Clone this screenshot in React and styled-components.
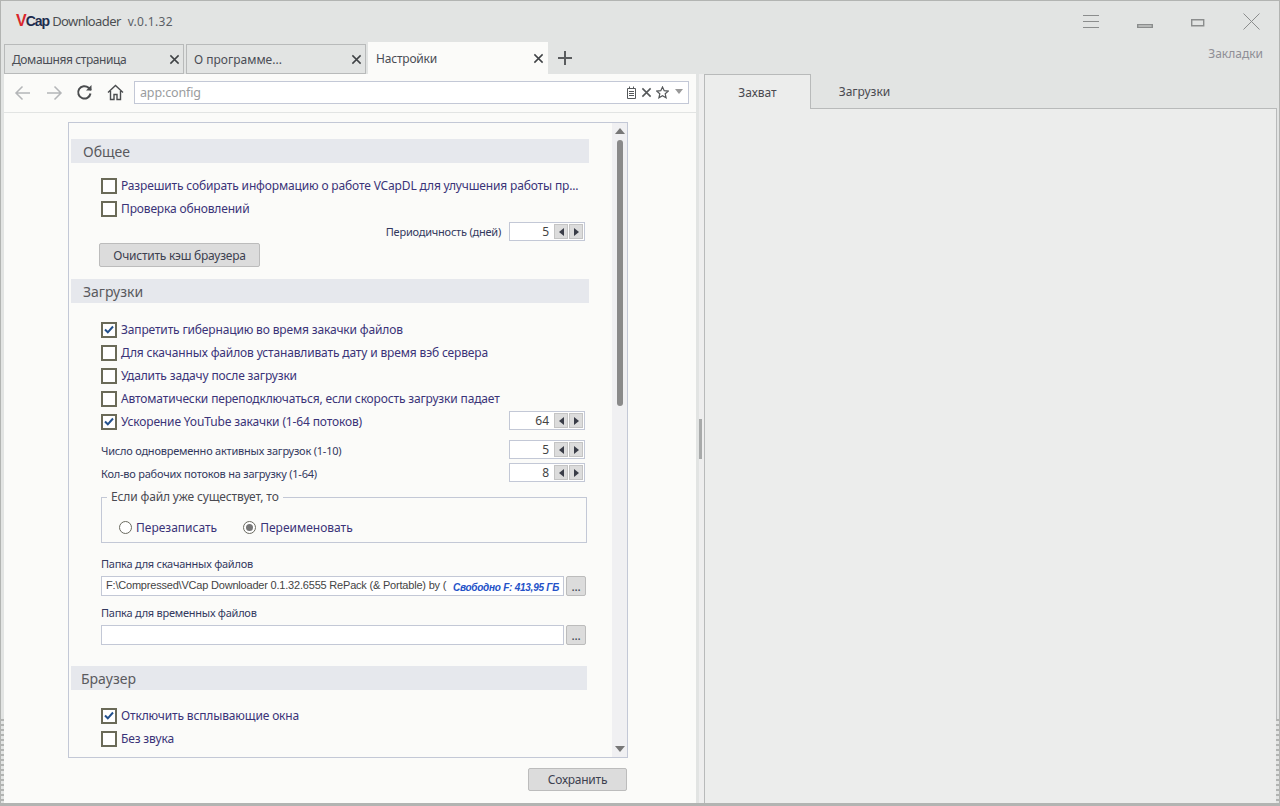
import styled, { createGlobalStyle } from 'styled-components';

const GlobalStyle = createGlobalStyle`
  html, body {
    margin: 0;
    padding: 0;
    background: #e2e4e3;
    overflow: hidden;
  }
  * {
    box-sizing: border-box;
  }
  body {
    font-family: "Noto Sans", "Liberation Sans", sans-serif;
    font-size: 12px;
    letter-spacing: -0.15px;
  }
`;

const Window = styled.div`
  position: relative;
  display: flex;
  flex-direction: column;
  width: 1280px;
  height: 806px;
  background: #e2e4e3;
  border-top: 1px solid #b2b4b2;
  border-bottom: 3px solid #b2b4b2;
  border-left: 1px solid #b2b4b2;
  border-right: 1px solid #b2b4b2;
  overflow: hidden;
`;

// resize grip dashes on the window edges
const EdgeGrip = styled.span`
  position: absolute;
  top: 718px;
  ${(p) => (p.$right ? 'right: -1px;' : 'left: -1px;')}
  width: 4px;
  height: 84px;
  background: repeating-linear-gradient(to bottom, #b2b4b2 0 2px, #e2e4e3 2px 5px);
`;

const TitleBar = styled.div`
  display: flex;
  align-items: center;
  justify-content: space-between;
  height: 41px;
  padding: 0 15px;
`;

const Brand = styled.div`
  display: flex;
  align-items: baseline;
  margin-top: -1px;
`;

const LogoMark = styled.span`
  font-family: "Liberation Sans", sans-serif;
  font-size: 14px;
  font-weight: 700;
  letter-spacing: -1px;
  color: #1d2c4e;
  em {
    font-style: normal;
    font-size: 16px;
    color: #d9262c;
  }
`;

const LogoWord = styled.span`
  font-size: 13px;
  letter-spacing: -0.6px;
  color: #4c4f52;
  margin-left: 3px;
`;

const Version = styled.span`
  font-size: 12px;
  letter-spacing: 0.3px;
  color: #5b6066;
  margin-left: 7px;
`;

const WindowButtons = styled.div`
  display: flex;
  align-items: center;
  gap: 38px;
  margin-right: 4px;
  color: #8b8d8d;
  svg {
    display: block;
  }
`;

const TabRow = styled.div`
  display: flex;
  align-items: flex-end;
  height: 32px;
  padding-left: 3px;
`;

const Tab = styled.div`
  display: flex;
  align-items: center;
  justify-content: space-between;
  width: 180px;
  height: ${(p) => (p.$active ? '32px' : '30px')};
  margin-right: 2px;
  padding: 0 3px 0 7px;
  background: ${(p) => (p.$active ? '#fbfbf9' : '#e2e4e3')};
  border: 1px solid ${(p) => (p.$active ? '#fbfbf9' : '#b8baba')};
  color: #4a4d55;
  letter-spacing: ${(p) => p.$spacing || 0}px;
  svg {
    display: block;
    color: #3f4245;
  }
`;

const AddTab = styled.div`
  display: flex;
  align-items: center;
  height: 32px;
  margin-left: 8px;
  color: #5a5c5e;
  svg {
    display: block;
  }
`;

const Bookmarks = styled.div`
  margin-left: auto;
  align-self: flex-start;
  padding: 3px 16px 0 0;
  letter-spacing: 0;
  color: #8f8f96;
`;

const Main = styled.div`
  display: flex;
  flex: 1;
  min-height: 0;
  padding-left: 3px;
`;

const LeftPanel = styled.div`
  display: flex;
  flex-direction: column;
  width: 692px;
  background: #fbfbf9;
`;

const Toolbar = styled.div`
  display: flex;
  align-items: center;
  height: 39px;
  padding: 0 7px 1px 3px;
  border-bottom: 1px solid #e2e4e3;
  svg {
    display: block;
  }
`;

const NavButton = styled.div`
  display: flex;
  justify-content: center;
  width: 31px;
  color: ${(p) => (p.$dim ? '#b4b6b8' : '#4b4d4f')};
`;

const AddressBar = styled.div`
  display: flex;
  align-items: center;
  flex: 1;
  height: 23px;
  margin-left: 3px;
  padding: 0 3px 0 5px;
  background: #fff;
  border: 1px solid #c3c8d6;
`;

const AddressText = styled.span`
  flex: 1;
  font-size: 12.5px;
  line-height: 19px;
  color: #9a9c9e;
`;

const AddressIcon = styled.span`
  display: flex;
  margin-left: 4px;
  color: #55585a;
`;

const DropArrow = styled.span`
  width: 0;
  height: 0;
  margin: -2px 2px 0 6px;
  border-left: 4px solid transparent;
  border-right: 4px solid transparent;
  border-top: 5px solid #999;
`;

const SettingsArea = styled.div`
  display: flex;
  flex-direction: column;
  flex: 1;
  min-height: 0;
  padding: 9px 0 0 64px;
`;

const SettingsFrame = styled.div`
  display: flex;
  width: 560px;
  height: 636px;
  background: #fbfbf9;
  border: 1px solid #c3c8d6;
`;

const SettingsScroll = styled.div`
  flex: 1;
  min-width: 0;
  padding: 16px 23px 0 2px;
  overflow: hidden;
`;

const Scrollbar = styled.div`
  display: flex;
  flex-direction: column;
  align-items: center;
  flex: none;
  width: 15px;
  padding-top: 5px;
  background: #f0f0f2;
`;

const ScrollArrow = styled.span`
  width: 0;
  height: 0;
  border-left: 5px solid transparent;
  border-right: 5px solid transparent;
  ${(p) => (p.$down ? 'border-top: 6px solid #777; margin-top: auto; margin-bottom: 5px;' : 'border-bottom: 6px solid #777;')}
`;

const ScrollThumb = styled.span`
  width: 6px;
  height: 266px;
  margin-top: 6px;
  border-radius: 3px;
  background: #8a8a8a;
`;

const SectionHead = styled.div`
  display: flex;
  align-items: center;
  width: ${(p) => p.$width || 518}px;
  height: 24px;
  padding-left: ${(p) => p.$pad || 12}px;
  margin-top: ${(p) => p.$top || 0}px;
  background: #e6e8ed;
  font-size: 14px;
  letter-spacing: 0;
  color: #5a5a5e;
`;

const CheckRow = styled.div`
  display: flex;
  align-items: center;
  height: 23px;
  margin-top: ${(p) => p.$top || 0}px;
  padding-left: 30px;
  color: #3a3378;
`;

const CheckBox = styled.span`
  display: flex;
  align-items: center;
  justify-content: center;
  flex: none;
  width: 16px;
  height: 16px;
  margin-right: 4px;
  background: #fff;
  border: 2px solid #6a6a58;
  svg {
    display: block;
  }
`;

const CheckLabel = styled.span`
  flex: 1;
  white-space: nowrap;
`;

const SpinRow = styled.div`
  display: flex;
  align-items: center;
  height: 23px;
  margin-top: ${(p) => p.$top || 0}px;
  padding-left: 30px;
  color: #33395e;
  font-size: 11px;
  letter-spacing: -0.22px;
  justify-content: ${(p) => (p.$end ? 'flex-end' : 'flex-start')};
`;

const SpinLabel = styled.span`
  flex: ${(p) => (p.$end ? 'none' : 1)};
  margin-right: ${(p) => (p.$end ? '8px' : 0)};
  margin-top: ${(p) => (p.$end ? 0 : '2px')};
  white-space: nowrap;
`;

const Spinner = styled.div`
  display: flex;
  align-items: center;
  justify-content: flex-end;
  flex: none;
  width: 76px;
  height: 19px;
  margin-right: 4px;
  margin-bottom: ${(p) => (p.$raised ? '2px' : 0)};
  padding-right: 1px;
  background: #fff;
  border: 1px solid #c3c8d6;
  font-size: 12px;
  letter-spacing: 0;
  color: #444;
`;

const SpinValue = styled.span`
  margin-right: 4px;
`;

const SpinButton = styled.span`
  display: flex;
  align-items: center;
  justify-content: center;
  width: 14px;
  height: 15px;
  margin-left: 1px;
  background: #dcdcdc;
  border: 1px solid #c4c4c4;
  &::before {
    content: '';
    border-top: 4px solid transparent;
    border-bottom: 4px solid transparent;
    ${(p) => (p.$right ? 'border-left: 5px solid #3a3d48;' : 'border-right: 5px solid #3a3d48;')}
  }
`;

const GreyButton = styled.button`
  display: block;
  flex: none;
  width: ${(p) => p.$width}px;
  height: ${(p) => p.$height}px;
  margin-left: ${(p) => p.$left || 0}px;
  padding: 0;
  background: #dcdcdc;
  border: 1px solid #bcbcbc;
  border-radius: 2px;
  font-family: inherit;
  font-size: 12px;
  letter-spacing: -0.25px;
  color: #3d4150;
`;

const RadioGroup = styled.fieldset`
  display: flex;
  align-items: center;
  gap: 26px;
  width: 486px;
  height: 53px;
  margin: 6px 0 0 30px;
  padding: 8px 0 0 17px;
  border: 1px solid #c3c8d6;
  legend {
    margin-left: -12px;
    padding: 0 4px;
    color: #4a4a52;
    line-height: 14px;
  }
`;

const RadioItem = styled.label`
  display: flex;
  align-items: center;
  gap: 4px;
  letter-spacing: 0;
  color: #3a3378;
`;

const RadioDot = styled.span`
  display: flex;
  align-items: center;
  justify-content: center;
  width: 13px;
  height: 13px;
  border-radius: 50%;
  background: #fff;
  border: 1px solid #6a6a60;
  &::after {
    content: '';
    width: 7px;
    height: 7px;
    border-radius: 50%;
    background: ${(p) => (p.$on ? '#777' : 'transparent')};
  }
`;

const PathLabel = styled.div`
  height: 16px;
  margin: ${(p) => p.$top || 0}px 0 4px 30px;
  font-size: 11px;
  line-height: 16px;
  letter-spacing: -0.25px;
  color: #33395e;
`;

const PathRow = styled.div`
  display: flex;
  align-items: center;
  gap: 2px;
  margin-left: 30px;
`;

const PathInput = styled.div`
  display: flex;
  width: 463px;
  height: 20px;
  padding-left: 4px;
  background: #fff;
  border: 1px solid #c3c8d6;
  font-family: "Liberation Sans", sans-serif;
  font-size: 11px;
  line-height: 17px;
  letter-spacing: -0.2px;
  color: #444;
  white-space: nowrap;
`;

const PathText = styled.span`
  flex: 1;
  min-width: 0;
`;

const FreeSpace = styled.span`
  flex: none;
  padding: 4px 4px 0 0;
  font-size: 10px;
  line-height: 14px;
  letter-spacing: -0.25px;
  font-weight: 700;
  font-style: italic;
  color: #2452c8;
`;

const SaveRow = styled.div`
  display: flex;
  justify-content: flex-end;
  width: 559px;
  margin-top: 10px;
`;

const Splitter = styled.div`
  display: flex;
  align-items: center;
  width: 8px;
  background: #eeeeee;
  border-left: 3px solid #e2e4e3;
`;

const SplitHandle = styled.span`
  width: 3px;
  height: 40px;
  background: #a8aaaa;
`;

const RightPanel = styled.div`
  display: flex;
  flex-direction: column;
  flex: 1;
  margin-right: 2px;
`;

const RightTabs = styled.div`
  display: flex;
  height: 34px;
`;

const RightTab = styled.div`
  position: relative;
  display: flex;
  align-items: center;
  justify-content: center;
  width: 107px;
  margin-bottom: ${(p) => (p.$active ? '-1px' : 0)};
  background: ${(p) => (p.$active ? '#ecedec' : 'transparent')};
  border: 1px solid ${(p) => (p.$active ? '#b8baba' : 'transparent')};
  border-bottom: none;
  letter-spacing: 0;
  color: #4a4a50;
`;

const RightBody = styled.div`
  flex: 1;
  background: #ecedec;
  border: 1px solid #b8baba;
  border-bottom: none;
`;

const Cross = ({ size = 11, weight = 1.6 }) => (
  <svg width={size} height={size} viewBox="0 0 12 12" fill="none" stroke="currentColor" strokeWidth={weight}>
    <path d="M1.5 1.5l9 9M10.5 1.5l-9 9" />
  </svg>
);

const Tick = () => (
  <svg width="10" height="9" viewBox="0 0 10 9" fill="none" stroke="#22508c" strokeWidth="2">
    <path d="M1 4.5l2.8 2.8L9 1.5" />
  </svg>
);

const Check = ({ on, label, top }) => (
  <CheckRow $top={top}>
    <CheckBox>{on && <Tick />}</CheckBox>
    <CheckLabel>{label}</CheckLabel>
  </CheckRow>
);

const Spin = ({ value, raised }) => (
  <Spinner $raised={raised}>
    <SpinValue>{value}</SpinValue>
    <SpinButton />
    <SpinButton $right />
  </Spinner>
);

const App = () => {
  return (
    <Window>
      <GlobalStyle />
      <EdgeGrip />
      <EdgeGrip $right />
      <TitleBar>
        <Brand>
          <LogoMark>
            <em>V</em>Cap
          </LogoMark>
          <LogoWord>Downloader</LogoWord>
          <Version>v.0.1.32</Version>
        </Brand>
        <WindowButtons>
          <svg width="16" height="14" viewBox="0 0 16 14" stroke="currentColor" strokeWidth="1">
            <path d="M0 .5h16M0 6.5h16M0 12.5h16" />
          </svg>
          <svg width="16" height="14" viewBox="0 0 16 14" fill="none" stroke="currentColor" strokeWidth="1.4">
            <path d="M.7 9.7h14.6v2.6H.7z" />
          </svg>
          <svg width="14" height="14" viewBox="0 0 14 14" fill="none" stroke="currentColor" strokeWidth="1.4">
            <path d="M.7 4.7h12v6h-12z" />
          </svg>
          <svg width="17" height="17" viewBox="0 0 17 17" fill="none" stroke="currentColor" strokeWidth="1">
            <path d="M.5.5l16 16M16.5.5l-16 16" />
          </svg>
        </WindowButtons>
      </TitleBar>
      <TabRow>
        <Tab $spacing={-0.4}>
          Домашняя страница
          <Cross />
        </Tab>
        <Tab>
          О программе...
          <Cross />
        </Tab>
        <Tab $active $spacing={-0.2}>
          Настройки
          <Cross />
        </Tab>
        <AddTab>
          <svg width="14" height="14" viewBox="0 0 14 14" stroke="currentColor" strokeWidth="2">
            <path d="M7 0v14M0 7h14" />
          </svg>
        </AddTab>
        <Bookmarks>Закладки</Bookmarks>
      </TabRow>
      <Main>
        <LeftPanel>
          <Toolbar>
            <NavButton $dim>
              <svg width="18" height="16" viewBox="0 0 18 16" fill="none" stroke="currentColor" strokeWidth="1.5">
                <path d="M16 8H2M8.5 1.5L2 8l6.5 6.5" />
              </svg>
            </NavButton>
            <NavButton $dim>
              <svg width="18" height="16" viewBox="0 0 18 16" fill="none" stroke="currentColor" strokeWidth="1.5">
                <path d="M2 8h14M9.5 1.5L16 8l-6.5 6.5" />
              </svg>
            </NavButton>
            <NavButton>
              <svg width="17" height="17" viewBox="0 0 17 17" fill="none" stroke="currentColor" strokeWidth="2">
                <path d="M14.5 9.5A6.2 6.2 0 1 1 12.6 3.8L15 6" />
                <path d="M15.5 1v5.5H10" fill="currentColor" stroke="none" />
              </svg>
            </NavButton>
            <NavButton>
              <svg width="17" height="17" viewBox="0 0 17 17" fill="none" stroke="currentColor" strokeWidth="1.4">
                <path d="M1 8.5L8.5 1.5 16 8.5M3.5 7v8.5h3.5v-5h3v5h3.5V7" />
              </svg>
            </NavButton>
            <AddressBar>
              <AddressText>app:config</AddressText>
              <AddressIcon>
                <svg width="11" height="13" viewBox="0 0 11 13" fill="none" stroke="currentColor" strokeWidth="1">
                  <path d="M1.5 2.5h8v10h-8zM3.5.5v2M7.5.5v2M3 5.5h5M3 7.5h5M3 9.5h5" />
                </svg>
              </AddressIcon>
              <AddressIcon>
                <Cross size={11} weight={1.7} />
              </AddressIcon>
              <AddressIcon>
                <svg width="13" height="13" viewBox="0 0 13 13" fill="none" stroke="currentColor" strokeWidth="1.2">
                  <path d="M6.5 1l1.7 3.7 4 .4-3 2.7.9 4-3.6-2.1-3.6 2.1.9-4-3-2.7 4-.4z" />
                </svg>
              </AddressIcon>
              <DropArrow />
            </AddressBar>
          </Toolbar>
          <SettingsArea>
            <SettingsFrame>
              <SettingsScroll>
                <SectionHead>Общее</SectionHead>
                <Check top={11} label="Разрешить собирать информацию о работе VCapDL для улучшения работы пр..." />
                <Check label="Проверка обновлений" />
                <SpinRow $end>
                  <SpinLabel $end>Периодичность (дней)</SpinLabel>
                  <Spin value="5" />
                </SpinRow>
                <GreyButton $left={28} $width={161} $height={24}>
                  Очистить кэш браузера
                </GreyButton>
                <SectionHead $top={12}>Загрузки</SectionHead>
                <Check top={15} on label="Запретить гибернацию во время закачки файлов" />
                <Check label="Для скачанных файлов устанавливать дату и время вэб сервера" />
                <Check label="Удалить задачу после загрузки" />
                <Check label="Автоматически переподключаться, если скорость загрузки падает" />
                <CheckRow>
                  <CheckBox>
                    <Tick />
                  </CheckBox>
                  <CheckLabel>Ускорение YouTube закачки (1-64 потоков)</CheckLabel>
                  <Spin value="64" raised />
                </CheckRow>
                <SpinRow $top={5}>
                  <SpinLabel>Число одновременно активных загрузок (1-10)</SpinLabel>
                  <Spin value="5" />
                </SpinRow>
                <SpinRow>
                  <SpinLabel>Кол-во рабочих потоков на загрузку (1-64)</SpinLabel>
                  <Spin value="8" />
                </SpinRow>
                <RadioGroup>
                  <legend>Если файл уже существует, то</legend>
                  <RadioItem>
                    <RadioDot />
                    Перезаписать
                  </RadioItem>
                  <RadioItem>
                    <RadioDot $on />
                    Переименовать
                  </RadioItem>
                </RadioGroup>
                <PathLabel $top={13}>Папка для скачанных файлов</PathLabel>
                <PathRow>
                  <PathInput>
                    <PathText>F:\Compressed\VCap Downloader 0.1.32.6555 RePack (&amp; Portable) by (</PathText>
                    <FreeSpace>Свободно F: 413,95 ГБ</FreeSpace>
                  </PathInput>
                  <GreyButton $width={20} $height={20}>...</GreyButton>
                </PathRow>
                <PathLabel $top={9}>Папка для временных файлов</PathLabel>
                <PathRow>
                  <PathInput />
                  <GreyButton $width={20} $height={20}>...</GreyButton>
                </PathRow>
                <SectionHead $top={21} $width={516} $pad={10}>Браузер</SectionHead>
                <Check top={14} on label="Отключить всплывающие окна" />
                <Check label="Без звука" />
              </SettingsScroll>
              <Scrollbar>
                <ScrollArrow />
                <ScrollThumb />
                <ScrollArrow $down />
              </Scrollbar>
            </SettingsFrame>
            <SaveRow>
              <GreyButton $width={99} $height={23}>Сохранить</GreyButton>
            </SaveRow>
          </SettingsArea>
        </LeftPanel>
        <Splitter>
          <SplitHandle />
        </Splitter>
        <RightPanel>
          <RightTabs>
            <RightTab $active>Захват</RightTab>
            <RightTab>Загрузки</RightTab>
          </RightTabs>
          <RightBody />
        </RightPanel>
      </Main>
    </Window>
  );
};

export default App;
